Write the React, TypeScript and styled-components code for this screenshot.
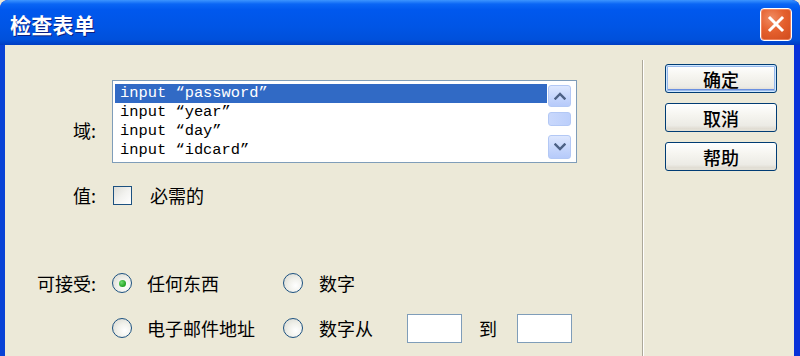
import React from "react";
import styled, { createGlobalStyle } from "styled-components";

const Global = createGlobalStyle`
  html, body { margin: 0; padding: 0; background: #ECE9D8; }
  body { width: 800px; height: 356px; overflow: hidden; }
  * { box-sizing: border-box; }
`;

const CJK = `"Noto Sans CJK SC", "Noto Sans", sans-serif`;

const Window = styled.div`
  width: 800px;
  height: 356px;
  display: flex;
  flex-direction: column;
  overflow: hidden;
  background: #0831d9;
  border-radius: 8px 8px 0 0;
  font-family: ${CJK};
  color: #000;
`;

const TitleBar = styled.div`
  height: 45px;
  flex: none;
  display: flex;
  align-items: center;
  justify-content: space-between;
  padding: 3px 8px 0 10px;
  background: linear-gradient(
    to bottom,
    #3d95ff 0%,
    #0a66f5 9%,
    #0058ee 22%,
    #0055e5 60%,
    #0050db 88%,
    #003dc2 100%
  );
  border-radius: 8px 8px 0 0;
`;

const Title = styled.div`
  font-family: ${CJK};
  font-weight: 700;
  font-size: 21px;
  color: #fff;
  letter-spacing: 0.3px;
  text-shadow: 1px 1px 0 #0a1f80;
`;

const CloseBtn = styled.div`
  width: 32px;
  height: 33px;
  border: 1px solid #fff;
  border-radius: 4px;
  background: radial-gradient(circle at 35% 30%, #f08c62 0%, #e5602e 45%, #cf4a1c 100%);
  display: flex;
  align-items: center;
  justify-content: center;
  box-shadow: inset 0 0 0 1px rgba(255, 170, 140, 0.5);
`;

const Body = styled.div`
  flex: 1;
  display: flex;
  background: #ece9d8;
  border-left: 5px solid #0842d6;
  border-right: 6px solid #0831d9;
`;

const Main = styled.div`
  width: 637px;
  flex: none;
  display: grid;
  grid-template-columns: 91px 1fr;
  column-gap: 16px;
  align-content: start;
  padding-top: 35px;
`;

const Label = styled.div<{ $top?: number }>`
  font-size: 18px;
  line-height: 24px;
  text-align: right;
  padding-top: ${(p) => p.$top ?? 0}px;
  white-space: nowrap;
`;

const Cell = styled.div<{ $mt?: number; $h?: number }>`
  margin-top: ${(p) => p.$mt ?? 0}px;
  height: ${(p) => p.$h ?? 24}px;
  display: flex;
  align-items: center;
`;

const Spacer = styled.div<{ $mt?: number }>`
  margin-top: ${(p) => p.$mt ?? 0}px;
`;

const ListBox = styled.div`
  width: 465px;
  height: 83px;
  border: 1px solid #7f9db9;
  background: #fff;
  display: flex;
`;

const Items = styled.div`
  flex: 1;
  padding: 3px 1px 0 2px;
`;

const Item = styled.div<{ $sel?: boolean }>`
  height: 19px;
  line-height: 19px;
  padding-left: 5px;
  font-family: "Liberation Mono", "DejaVu Sans Mono", monospace;
  font-size: 15.4px;
  white-space: pre;
  background: ${(p) => (p.$sel ? "#316ac5" : "transparent")};
  color: ${(p) => (p.$sel ? "#fff" : "#000")};
`;

const ScrollBar = styled.div`
  width: 23px;
  flex: none;
  margin: 4px 5px 3px 0;
  display: flex;
  flex-direction: column;
`;

const ScrollBtn = styled.div<{ $h: number }>`
  height: ${(p) => p.$h}px;
  border: 1px solid #b3c8f5;
  border-radius: 3px;
  background: linear-gradient(to bottom, #dde7fe 0%, #c6d6fc 55%, #b6cafa 100%);
  display: flex;
  align-items: center;
  justify-content: center;
`;

const Thumb = styled.div`
  height: 14px;
  margin-top: 5px;
  border: 1px solid #b3c8f5;
  border-radius: 3px;
  background: linear-gradient(to right, #c9d8fc, #bccffb);
`;

const Track = styled.div`
  flex: 1;
`;

const CheckBox = styled.div`
  width: 19px;
  height: 19px;
  margin-left: 1px;
  border: 1px solid #1c5180;
  background: linear-gradient(135deg, #dcdcd6 0%, #f2f2ef 50%, #ffffff 100%);
`;

const Text = styled.span<{ $ml?: number }>`
  font-size: 18px;
  line-height: 24px;
  margin-left: ${(p) => p.$ml ?? 0}px;
  white-space: nowrap;
`;

const OptionRow = styled.div<{ $mt?: number; $h?: number }>`
  margin-top: ${(p) => p.$mt ?? 0}px;
  height: ${(p) => p.$h ?? 24}px;
  display: grid;
  grid-template-columns: 171px auto;
  align-items: center;
`;

const Option = styled.div`
  display: flex;
  align-items: center;
`;

const Radio = styled.div<{ $checked?: boolean }>`
  width: 20px;
  height: 20px;
  border-radius: 50%;
  border: 1px solid #1c5180;
  background: radial-gradient(circle at 65% 65%, #ffffff 0%, #f0f0ea 45%, #d4d4cc 100%);
  display: flex;
  align-items: center;
  justify-content: center;
  flex: none;
  &::after {
    content: "";
    display: ${(p) => (p.$checked ? "block" : "none")};
    width: 7px;
    height: 7px;
    border-radius: 50%;
    background: radial-gradient(circle at 35% 35%, #6fdc6f 0%, #21a121 70%, #1a8a1a 100%);
  }
`;

const NumInput = styled.div<{ $ml: number }>`
  width: 55px;
  height: 29px;
  margin-left: ${(p) => p.$ml}px;
  border: 1px solid #7f9db9;
  background: #fff;
`;

const Divider = styled.div`
  width: 2px;
  flex: none;
  margin-top: 15px;
  border-left: 1px solid #aca899;
  border-right: 1px solid #fff;
`;

const Side = styled.div`
  flex: 1;
  display: flex;
  flex-direction: column;
  gap: 10px;
  padding: 19px 0 0 21px;
`;

const Button = styled.div<{ $default?: boolean }>`
  width: 112px;
  height: 29px;
  border: 1px solid #003c74;
  border-radius: 3px;
  background: linear-gradient(to bottom, #ffffff 0%, #f6f5f0 40%, #ecebe5 80%, #d8d2c6 100%);
  box-shadow: ${(p) =>
    p.$default
      ? "inset 0 0 0 1px #cee7ff, inset 0 0 0 2px #98b8ea, inset 0 -1px 0 2px #6a8fe0"
      : "inset 0 -2px 0 0 #e3e0d6"};
  display: flex;
  align-items: center;
  justify-content: center;
  font-size: 18px;
  font-weight: 500;
  line-height: 1;
`;

const Chevron = ({ up }: { up?: boolean }) => (
  <svg width="12" height="8" viewBox="0 0 12 8">
    <path
      d={up ? "M1.5 6.5 L6 2 L10.5 6.5" : "M1.5 1.5 L6 6 L10.5 1.5"}
      fill="none"
      stroke="#4d6185"
      strokeWidth="2.4"
      strokeLinecap="square"
    />
  </svg>
);

const items = ["input “password”", "input “year”", "input “day”", "input “idcard”"];

export default function App() {
  return (
    <>
      <Global />
      <Window>
        <TitleBar>
          <Title>检查表单</Title>
          <CloseBtn>
            <svg width="18" height="18" viewBox="0 0 18 18">
              <path d="M3 3 L15 15 M15 3 L3 15" stroke="#fff" strokeWidth="3" strokeLinecap="square" />
            </svg>
          </CloseBtn>
        </TitleBar>
        <Body>
          <Main>
            <Label $top={38}>域:</Label>
            <Cell $h={83}>
              <ListBox>
                <Items>
                  {items.map((t, i) => (
                    <Item key={t} $sel={i === 0}>
                      {t}
                    </Item>
                  ))}
                </Items>
                <ScrollBar>
                  <ScrollBtn $h={22}>
                    <Chevron up />
                  </ScrollBtn>
                  <Thumb />
                  <Track />
                  <ScrollBtn $h={24}>
                    <Chevron />
                  </ScrollBtn>
                </ScrollBar>
              </ListBox>
            </Cell>

            <Spacer $mt={20}>
              <Label>值:</Label>
            </Spacer>
            <Cell $mt={20}>
              <CheckBox />
              <Text $ml={18}>必需的</Text>
            </Cell>

            <Spacer $mt={64}>
              <Label>可接受:</Label>
            </Spacer>
            <OptionRow $mt={64}>
              <Option>
                <Radio $checked />
                <Text $ml={15}>任何东西</Text>
              </Option>
              <Option>
                <Radio />
                <Text $ml={16}>数字</Text>
              </Option>
            </OptionRow>

            <div />
            <OptionRow $mt={18} $h={30}>
              <Option>
                <Radio />
                <Text $ml={15}>电子邮件地址</Text>
              </Option>
              <Option>
                <Radio />
                <Text $ml={16}>数字从</Text>
                <NumInput $ml={34} />
                <Text $ml={17}>到</Text>
                <NumInput $ml={20} />
              </Option>
            </OptionRow>
          </Main>
          <Divider />
          <Side>
            <Button $default>确定</Button>
            <Button>取消</Button>
            <Button>帮助</Button>
          </Side>
        </Body>
      </Window>
    </>
  );
}
